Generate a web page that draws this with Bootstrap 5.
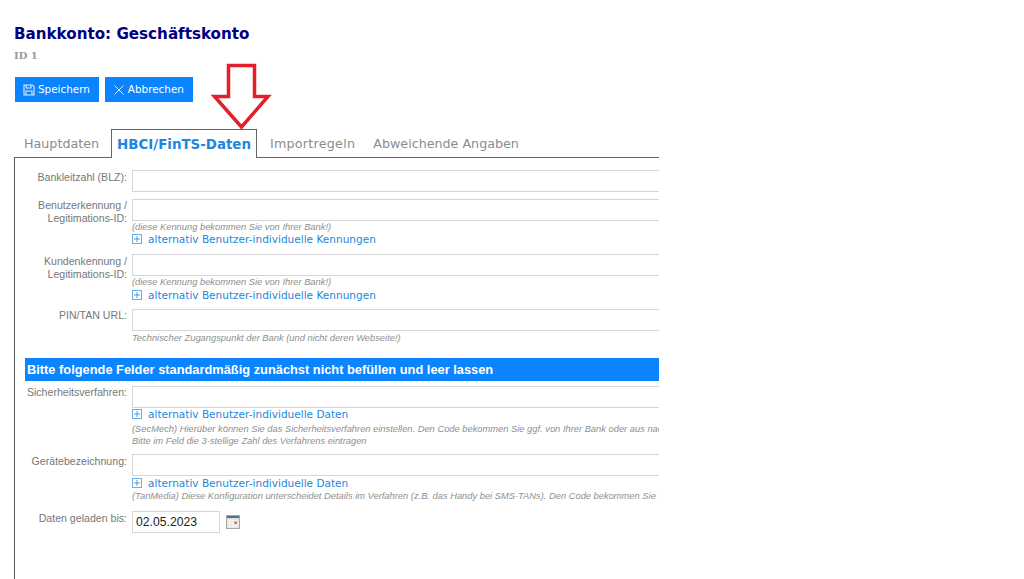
<!DOCTYPE html>
<html lang="de">
<head>
<meta charset="utf-8">
<title>Bankkonto</title>
<link rel="stylesheet" href="https://cdn.jsdelivr.net/npm/bootstrap@5.3.0/dist/css/bootstrap.min.css">
<style>
html,body{height:579px;overflow:hidden;background:#fff}
body{font-family:"Liberation Sans",Arial,sans-serif;font-size:12px;color:#666}
.page-wrap{width:659px;height:579px;padding:0 0 0 14px;position:relative;overflow:hidden}
.page-title{font-family:"DejaVu Sans",sans-serif;font-weight:700;font-size:15.15px;line-height:20px;color:#000080;margin:0;padding-top:24px}
.page-id{font-family:"DejaVu Serif",serif;font-weight:700;font-size:10px;line-height:12px;color:#999;margin-top:6px;height:12px}
.btn-row{margin-top:15px;margin-left:1px;gap:6px}
.act-btn{background:#0a84ff;color:#fff;border:0;border-radius:0;height:25px;padding:0 9px 0 8px;font-family:"DejaVu Sans",sans-serif;font-size:10.4px;display:flex;align-items:center;gap:3px;white-space:nowrap}
.tab-row{margin-top:27px;height:29px;align-items:flex-end;border-bottom:1px solid #666;position:relative}
.tab-item{font-family:"DejaVu Sans",sans-serif;font-size:12.7px;color:#8c8c8c;padding:0 9px;height:28px;line-height:30px;white-space:nowrap}
.tab-item.on{color:#1c86e0;font-weight:700;font-size:13.4px;border:1px solid #666;border-bottom:0;background:#fff;height:29px;margin-bottom:-1px;padding:0 5px;line-height:29px;margin-left:3px;margin-right:4px}
.tab-first{padding-left:10px}
.tab-wide{letter-spacing:.25px}
.form-panel{border-left:1px solid #555;height:440px;padding:12px 0 0 10px;overflow:hidden}
.f-row{display:flex;width:900px}
.f-label{width:102px;flex:none;text-align:right;font-size:10.6px;line-height:13px;color:#777;margin-right:5px}
.f-body{flex:1;min-width:0}
.f-input{display:block;width:100%;height:22px;border:1px solid #d5d5d5;background:#fff}
.f-note{font-style:italic;font-size:9.33px;line-height:12px;color:#8f8f8f;white-space:nowrap;width:527px;overflow:hidden}
.f-link{font-family:"DejaVu Sans",sans-serif;font-size:10.54px;line-height:14px;color:#2388dc;display:flex;align-items:center;gap:6px;white-space:nowrap}
.plus-box{width:10px;height:10px;border:1px solid #6aaee6;display:flex;align-items:center;justify-content:center;flex:none}
.sec-banner{background:#0a84ff;color:#fff;font-weight:700;font-size:12.83px;height:23px;line-height:23px;padding-left:2px;width:634px;white-space:nowrap;margin-top:14px}
.date-input{width:88px;height:22px;border:1px solid #d5d5d5;font-size:12.2px;color:#222;padding:0 3px;line-height:20px;display:flex;align-items:center}
.cal-icon{margin-left:6px;margin-top:4px}
.arrow-over{position:absolute;left:210px;top:63px;pointer-events:none}
.pad-one{padding-top:1px}
.row-b{margin-top:7px}
.row-c{margin-top:8px}
.row-d{margin-top:7px}
.row-e{margin-top:5px}
.row-f{margin-top:7px}
.row-g{margin-top:9px}
.link-a{margin-top:-1px}
.link-c{margin-top:0}
.link-b{margin-top:-1px}
.note-b{margin-top:1px}
.note-c{margin-top:2px}
</style>
</head>
<body>
<div class="page-wrap">
  <h1 class="page-title">Bankkonto: Geschäftskonto</h1>
  <div class="page-id">ID 1</div>
  <div class="d-flex btn-row">
    <button type="button" class="act-btn">
      <svg width="12" height="12" viewBox="0 0 12 12" fill="none" stroke="#dbeeff" stroke-width="1.1"><path d="M1 1h8.500L11 2.500V11H1z"/><path d="M3.200 1v3h4.800V1M3 11V7h6v4"/></svg>
      Speichern</button>
    <button type="button" class="act-btn">
      <svg width="12" height="12" viewBox="0 0 12 12" fill="none" stroke="#dbeeff" stroke-width="1"><path d="M1.500 1.500l9 9M10.500 1.500l-9 9"/></svg>
      Abbrechen</button>
  </div>
  <div class="d-flex tab-row">
    <div class="tab-item tab-first">Hauptdaten</div>
    <div class="tab-item on">HBCI/FinTS-Daten</div>
    <div class="tab-item tab-wide">Importregeln</div>
    <div class="tab-item">Abweichende Angaben</div>
  </div>
  <div class="form-panel">
    <div class="f-row"><div class="f-label pad-one">Bankleitzahl (BLZ):</div><div class="f-body"><div class="f-input"></div></div></div>

    <div class="f-row row-b"><div class="f-label">Benutzerkennung / Legitimations-ID:</div><div class="f-body"><div class="f-input"></div>
      <div class="f-note">(diese Kennung bekommen Sie von Ihrer Bank!)</div>
      <div class="f-link link-a"><span class="plus-box"><svg width="8" height="8" viewBox="0 0 8 8"><path d="M4 1v6M1 4h6" stroke="#2388dc" stroke-width=".8"/></svg></span>alternativ Benutzer-individuelle Kennungen</div></div></div>

    <div class="f-row row-c"><div class="f-label pad-one">Kundenkennung / Legitimations-ID:</div><div class="f-body"><div class="f-input"></div>
      <div class="f-note">(diese Kennung bekommen Sie von Ihrer Bank!)</div>
      <div class="f-link link-c"><span class="plus-box"><svg width="8" height="8" viewBox="0 0 8 8"><path d="M4 1v6M1 4h6" stroke="#2388dc" stroke-width=".8"/></svg></span>alternativ Benutzer-individuelle Kennungen</div></div></div>

    <div class="f-row row-d"><div class="f-label">PIN/TAN URL:</div><div class="f-body"><div class="f-input"></div>
      <div class="f-note note-b">Technischer Zugangspunkt der Bank (und nicht deren Webseite!)</div></div></div>

    <div class="sec-banner">Bitte folgende Felder standardmäßig zunächst nicht befüllen und leer lassen</div>

    <div class="f-row row-e"><div class="f-label">Sicherheitsverfahren:</div><div class="f-body"><div class="f-input"></div>
      <div class="f-link link-b"><span class="plus-box"><svg width="8" height="8" viewBox="0 0 8 8"><path d="M4 1v6M1 4h6" stroke="#2388dc" stroke-width=".8"/></svg></span>alternativ Benutzer-individuelle Daten</div>
      <div class="f-note note-c">(SecMech) Hierüber können Sie das Sicherheitsverfahren einstellen. Den Code bekommen Sie ggf. von Ihrer Bank oder aus nachfolgender Liste.<br>Bitte im Feld die 3-stellige Zahl des Verfahrens eintragen</div></div></div>

    <div class="f-row row-f"><div class="f-label pad-one">Gerätebezeichnung:</div><div class="f-body"><div class="f-input"></div>
      <div class="f-link"><span class="plus-box"><svg width="8" height="8" viewBox="0 0 8 8"><path d="M4 1v6M1 4h6" stroke="#2388dc" stroke-width=".8"/></svg></span>alternativ Benutzer-individuelle Daten</div>
      <div class="f-note">(TanMedia) Diese Konfiguration unterscheidet Details im Verfahren (z.B. das Handy bei SMS-TANs). Den Code bekommen Sie von Ihrer Bank.</div></div></div>

    <div class="f-row row-g"><div class="f-label pad-one">Daten geladen bis:</div><div class="f-body d-flex align-items-start"><div class="date-input">02.05.2023</div>
      <svg class="cal-icon" width="14" height="14" viewBox="0 0 14 14"><rect x="0.5" y="0.5" width="13" height="13" fill="#e4e2dc" stroke="#a8a8a8"/><rect x="1" y="1" width="12" height="2" fill="#5b6a92"/><path d="M1 6h12M1 8.500h12M1 11h12M4 4v9M7 4v9M10 4v9" stroke="#fff" stroke-width="0.7"/><rect x="8.500" y="6.500" width="2.500" height="2.500" fill="#d06a6a"/></svg>
    </div></div>
  </div>
  <svg class="arrow-over" width="62" height="68" viewBox="0 0 62 68"><path d="M18.500 2.500H44.500V33.500H58L31.500 64L4.500 33.500H18.500Z" fill="#fff" stroke="#e3202a" stroke-width="3.500"/></svg>
</div>
</body>
</html>
